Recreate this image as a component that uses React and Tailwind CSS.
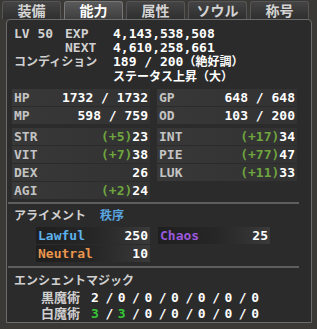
import React from 'react'

const mono = { fontFamily: '"DejaVu Sans Mono", "Noto Sans CJK JP", monospace' }

const tabs = ['装備', '能力', '属性', 'ソウル', '称号']

const Jp = ({ children, className = '' }) => (
  <span className={`text-[12px] ${className}`}>{children}</span>
)

const Bar = ({ label, value, bonus, w }) => (
  <div className={`${w} h-[17px] flex items-center justify-between pl-[2px] pr-[2px] bg-gradient-to-r from-[#383838] to-[#323232]`}>
    <span className="text-[#c4c4c4]">{label}</span>
    <span className="text-white">
      {bonus && <span className="text-[#6fa53e]">(+{bonus})</span>}
      {value}
    </span>
  </div>
)

const Align = ({ label, color, value, w }) => (
  <div className={`${w} h-[17px] flex items-center justify-between pl-[2px] pr-[2px] bg-gradient-to-r from-[#1f1f1f] via-[#262626] to-[#3a3a3a]`}>
    <span className={color}>{label}</span>
    <span className="text-white">{value}</span>
  </div>
)

const Magic = ({ label, values }) => (
  <div className="h-[16px] flex items-center">
    <span className="ml-[27px] w-[50px] text-[13px] text-[#d0d0d0]">{label}</span>
    {values.map((v, i) => (
      <span key={i} className="flex">
        <span className={`w-[10px] ${v.g ? 'text-[#35c535]' : 'text-white'}`}>{v.v}</span>
        {i < values.length - 1 && <span className="w-[16.7px] text-center text-white">/</span>}
      </span>
    ))}
  </div>
)

export default function App() {
  return (
    <div
      className="w-[317px] h-[329px] bg-[#3b3935] flex flex-col text-[13px] font-bold leading-none overflow-hidden"
      style={mono}
    >
      {/* tabs */}
      <div className="h-[19px] flex gap-[3px] px-[2px] pt-[1px]">
        {tabs.map((t, i) => (
          <div
            key={t}
            className={`w-[59px] flex items-center justify-center rounded-t-[3px] border border-b-0 text-[14px] ${
              i === 1
                ? 'bg-gradient-to-b from-[#5a5a5a] to-[#3e3e3e] border-[#777] text-white'
                : 'bg-gradient-to-b from-[#444] to-[#2f2f2f] border-[#555] text-[#d4d4d4]'
            }`}
          >
            {t}
          </div>
        ))}
      </div>

      {/* panel */}
      <div className="mx-[6px] w-[306px] h-[304px] bg-[#2b2b2b] border border-[#6c6c6c] rounded-t-[4px] pl-[7px] pt-[6px] flex flex-col">
        <div className="h-[15px] flex items-center">
          <span className="w-[51px] text-[#d0d0d0]">LV 50</span>
          <span className="w-[48px] text-[#d0d0d0]">EXP</span>
          <span className="text-white">4,143,538,508</span>
        </div>
        <div className="h-[14px] flex items-center">
          <span className="w-[51px]" />
          <span className="w-[48px] text-[#d0d0d0]">NEXT</span>
          <span className="text-white">4,610,258,661</span>
        </div>
        <div className="h-[15px] flex items-center">
          <span className="w-[99px] text-[#d0d0d0]"><Jp>コンディション</Jp></span>
          <span className="text-white">189 / 200<Jp>（絶好調）</Jp></span>
        </div>
        <div className="h-[15px] flex items-center">
          <span className="w-[99px]" />
          <span className="text-white"><Jp>ステータス上昇（大）</Jp></span>
        </div>

        {/* HP / MP */}
        <div className="mt-[5px] -ml-[2px] flex flex-col gap-[1px]">
          <div className="flex gap-[7px]">
            <Bar label="HP" value="1732 / 1732" w="w-[138px]" />
            <Bar label="GP" value="648 / 648" w="w-[140px]" />
          </div>
          <div className="flex gap-[7px]">
            <Bar label="MP" value="598 / 759" w="w-[138px]" />
            <Bar label="OD" value="103 / 200" w="w-[140px]" />
          </div>
        </div>

        {/* stats */}
        <div className="mt-[4px] -ml-[2px] flex gap-[7px]">
          <div className="flex flex-col gap-[1px]">
            <Bar label="STR" bonus="5" value="23" w="w-[138px]" />
            <Bar label="VIT" bonus="7" value="38" w="w-[138px]" />
            <Bar label="DEX" value="26" w="w-[138px]" />
            <Bar label="AGI" bonus="2" value="24" w="w-[138px]" />
          </div>
          <div className="flex flex-col gap-[1px]">
            <Bar label="INT" bonus="17" value="34" w="w-[140px]" />
            <Bar label="PIE" bonus="77" value="47" w="w-[140px]" />
            <Bar label="LUK" bonus="11" value="33" w="w-[140px]" />
          </div>
        </div>

        <div className="mt-[3px] -ml-[6px] w-[291px] h-[2px] bg-[#5e5e5e]" />

        {/* alignment */}
        <div className="mt-[5px] h-[15px] flex items-center text-[#d0d0d0]">
          <Jp className="w-[86px]">アライメント</Jp>
          <Jp className="text-[#5aa6e0]">秩序</Jp>
        </div>
        <div className="mt-[4px] ml-[22px] flex gap-[8px]">
          <div className="flex flex-col gap-[1px]">
            <Align label="Lawful" color="text-[#5cb2ec]" value="250" w="w-[114px]" />
            <Align label="Neutral" color="text-[#e8954e]" value="10" w="w-[114px]" />
          </div>
          <div>
            <Align label="Chaos" color="text-[#9a58dc]" value="25" w="w-[112px]" />
          </div>
        </div>

        <div className="mt-[4px] -ml-[6px] w-[291px] h-[2px] bg-[#5e5e5e]" />

        {/* magic */}
        <div className="mt-[5px] h-[15px] flex items-center text-[#d0d0d0]">
          <Jp>エンシェントマジック</Jp>
        </div>
        <div className="mt-[2px]">
          <Magic
            label="黒魔術"
            values={[{ v: 2 }, { v: 0 }, { v: 0 }, { v: 0 }, { v: 0 }, { v: 0 }, { v: 0 }]}
          />
          <Magic
            label="白魔術"
            values={[{ v: 3, g: 1 }, { v: 3, g: 1 }, { v: 0 }, { v: 0 }, { v: 0 }, { v: 0 }, { v: 0 }]}
          />
        </div>
      </div>
    </div>
  )
}
